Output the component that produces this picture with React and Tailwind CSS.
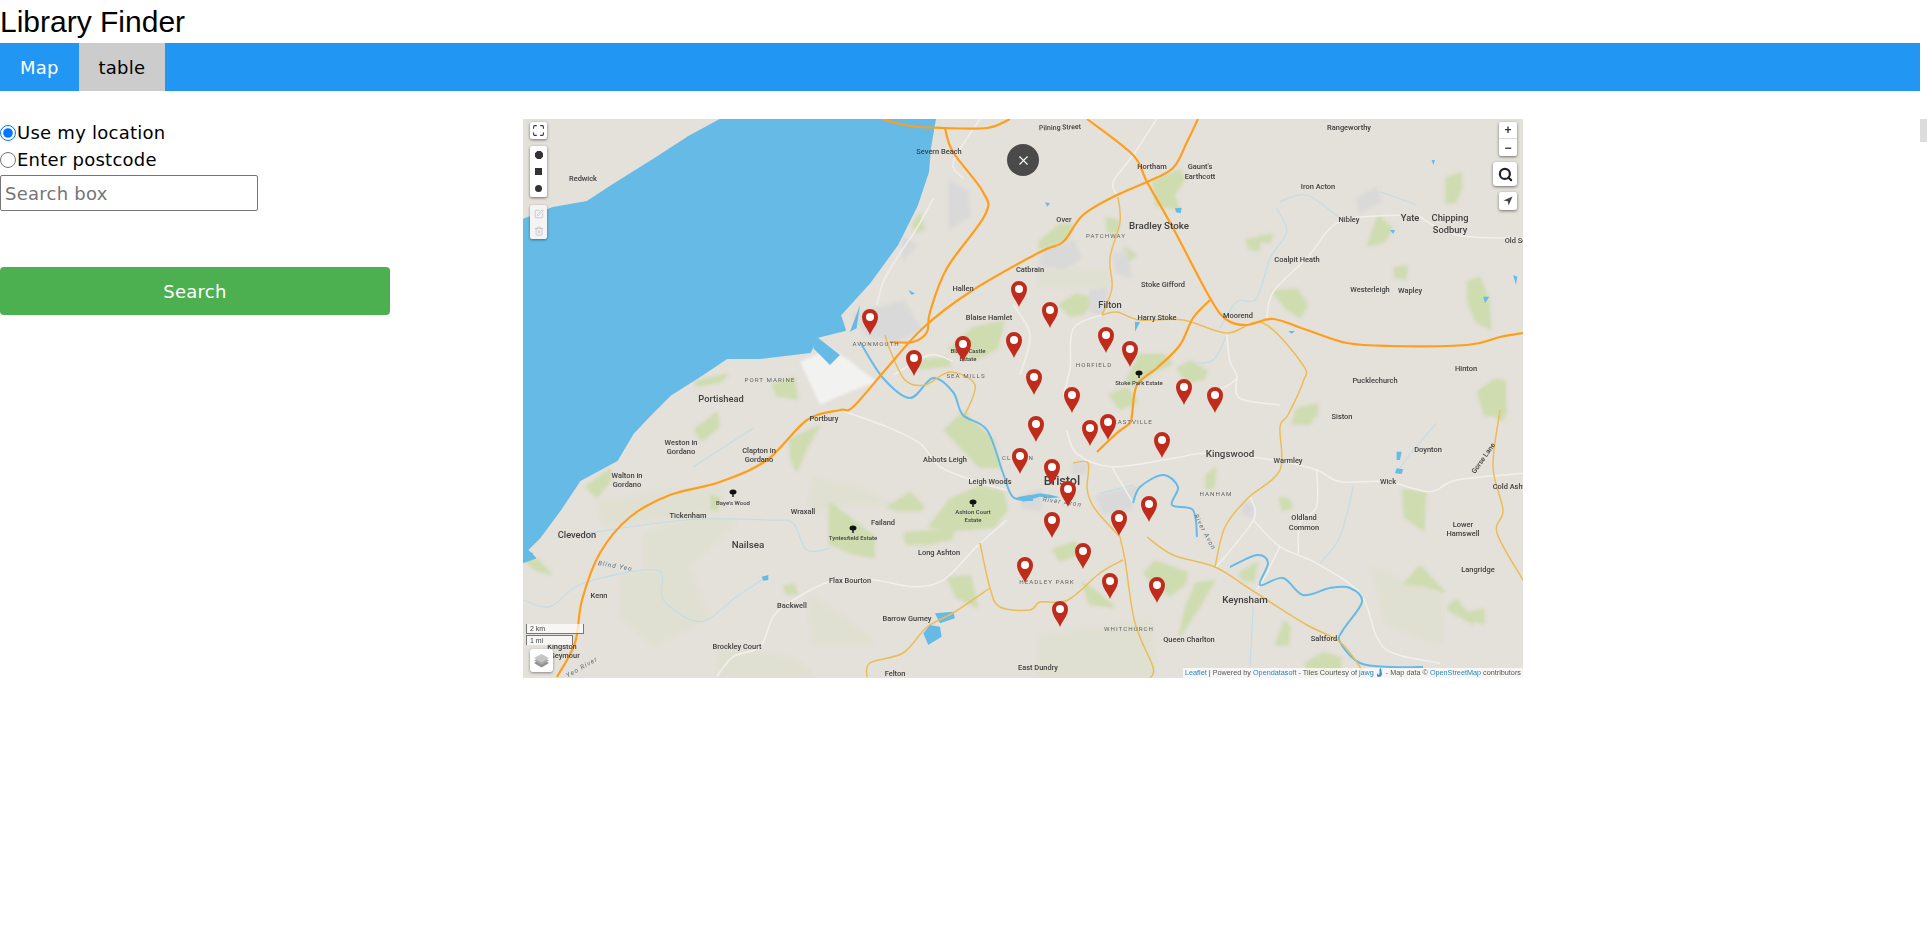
import { useState } from 'react';
import { Maximize, Search, SquarePen, Trash2, X } from 'lucide-react';

// Catmull-Rom through the points, so roads and rivers come out curved
const smooth = (pts) => {
  let d = `M${pts[0][0]} ${pts[0][1]}`;
  for (let i = 0; i < pts.length - 1; i++) {
    const p0 = pts[i - 1] || pts[i];
    const p1 = pts[i];
    const p2 = pts[i + 1];
    const p3 = pts[i + 2] || p2;
    const c1x = p1[0] + (p2[0] - p0[0]) / 6;
    const c1y = p1[1] + (p2[1] - p0[1]) / 6;
    const c2x = p2[0] - (p3[0] - p1[0]) / 6;
    const c2y = p2[1] - (p3[1] - p1[1]) / 6;
    d += ` C${c1x} ${c1y} ${c2x} ${c2y} ${p2[0]} ${p2[1]}`;
  }
  return d;
};

const WATER = '523,220 553,208 587,202 613,185 653,160 687,138 722,119 935,119 930,148 928,172 917,205 897,245 870,282 840,315 845,330 817,337 810,352 760,358 727,358 697,378 670,395 650,415 633,433 617,460 580,480 560,510 540,537 527,550 535,558 523,562';

const MOTORWAYS = [
  [[882,119],[910,126],[943,128],[987,128],[1010,119]],
  [[945,128],[953,152],[983,192],[985,215],[947,268],[930,312],[927,332],[913,342],[890,342]],
  [[557,677],[575,643],[582,600],[600,553],[630,517],[670,495],[720,482],[767,460],[807,420],[840,410],[853,407],[887,368],[923,328],[970,292],[1040,252],[1063,242],[1083,215],[1117,195],[1147,182],[1173,168],[1187,142],[1198,119]],
  [[1087,119],[1133,155],[1147,182],[1173,228],[1210,298],[1227,320],[1247,325],[1273,319],[1307,330],[1347,343],[1390,346],[1467,345],[1500,337],[1523,333]],
  [[1210,300],[1193,318],[1180,345],[1157,368],[1137,385],[1132,415],[1130,423],[1117,433],[1097,452]],
];

const A_ROADS = [
  [[1118,197],[1120,222],[1110,258],[1112,288],[1102,315]],
  [[1102,315],[1117,312],[1140,320],[1183,320],[1227,333],[1263,323],[1303,365],[1303,382],[1288,415],[1280,427],[1280,470],[1248,498],[1225,527],[1215,567]],
  [[1147,537],[1173,555],[1215,567],[1247,587],[1270,602],[1307,625],[1340,642],[1360,667],[1365,678]],
  [[1123,560],[1100,573],[1068,600],[1040,602],[1030,610],[1000,607],[990,588],[980,543]],
  [[990,588],[953,613],[927,627],[903,653],[870,663],[867,677]],
  [[1120,537],[1125,560],[1135,623],[1153,667],[1150,678]],
  [[1500,410],[1493,467],[1503,510],[1497,533],[1523,580]],
  [[1073,463],[1088,463],[1087,487],[1090,500],[1098,513],[1120,537]],
  [[885,335],[890,350],[905,380],[925,385],[950,372],[975,385],[965,415]],
];

const RIVERS = [
  [[860,342],[883,378],[910,398],[933,378],[953,392],[963,415],[987,430],[1003,473],[1013,497],[1033,500]],
  [[1133,503],[1140,487],[1163,475],[1178,487],[1172,505],[1193,510],[1197,537]],
  [[1230,567],[1257,555],[1268,563],[1260,585],[1283,578],[1303,595],[1330,588],[1350,588],[1362,602],[1343,630],[1340,642],[1360,663],[1393,667],[1423,667]],
];

// these are read off the 3x crops, hence the scaled groups below
const ZONES = [
  {
    at: 'translate(520 115) scale(0.3333)',
    pale: [],
    green: ['1290,700 1360,640 1450,620 1430,700 1370,730 1300,710', '1190,740 1280,730 1290,750 1200,760', '760,810 820,790 830,850 770,840', '530,800 620,780 600,800 530,810', '1180,330 1200,300 1210,340 1190,350'],
    grey: ['1000,600 1150,560 1200,640 1130,680 1040,660', '1290,200 1340,230 1350,300 1290,340 1290,280', '1150,370 1190,390 1150,430'],
    white: ['840,740 930,700 980,730 1070,800 990,830 900,870'],
    water: ['990,650 1020,570 1010,640', '890,665 960,720 930,750 880,700', '1165,525 1185,535 1175,540'],
    roads: [[[1380,12],[1300,140],[1330,190]], [[1070,570],[1090,500],[1130,430],[1190,340],[1240,250]], [[1120,780],[1230,720],[1300,740]], [[1480,570],[1530,660],[1500,780]]],
    streams: [],
  },
  {
    at: 'translate(1040 115) scale(0.3333)',
    pale: ['0,470 200,470 200,510 0,510'],
    green: ['340,200 420,165 430,195 400,240 415,280 350,270', '0,380 60,330 95,330 80,370 20,395 0,400', '1220,190 1262,175 1262,220 1245,262 1220,262', '1285,500 1320,490 1345,560 1350,640 1310,620 1285,560', '985,390 1015,305 1055,340 1030,380', '700,530 770,525 800,570 780,605 740,580', '60,570 105,540 160,550 130,595 90,600', '260,800 300,720 370,720 395,745 340,770 280,810', '210,840 260,820 290,860 240,880', '415,760 450,740 500,770 490,790 440,800', '1315,830 1365,795 1395,800 1395,900 1335,900', '1065,460 1100,455 1095,490 1065,485', '620,375 660,370 655,405 630,400', '660,365 695,360 690,380 670,380', '255,400 285,420 270,435', '200,310 235,320 230,350 205,350', '780,880 830,870 830,900 770,900'],
    grey: ['10,400 100,380 120,430 70,460 0,450', '950,250 1010,220 1020,260 960,290', '150,530 200,520 190,600 150,590', '220,420 260,410 270,490 230,470'],
    white: [],
    water: ['15,262 30,265 22,275', '405,280 425,278 422,295 408,292', '1175,135 1185,135 1180,150', '1050,345 1065,345 1060,357', '1420,480 1432,485 1428,510', '1330,545 1348,545 1335,565', '745,648 765,648 755,656', '285,620 300,622 285,650'],
    roads: [[[350,12],[280,120],[220,200],[230,240]], [[680,610],[700,530],[800,430],[900,320],[1080,300]], [[1130,300],[1250,360],[1449,370]], [[560,660],[570,740],[590,790],[530,830]], [[590,790],[600,850],[720,870]], [[185,600],[100,640],[90,760],[70,840]]],
    streams: [[[720,260],[800,240],[900,310]], [[710,280],[740,350],[690,430],[650,550],[590,560],[540,640]], [[1020,230],[1130,270]], [[450,745],[520,735],[560,660]]],
  },
  {
    at: 'translate(520 410) scale(0.3333)',
    pale: ['240,280 450,250 600,240 600,290 450,320 250,340', '380,370 550,320 640,340 500,470 380,470', '310,500 500,470 560,620 400,700 310,620', '880,210 1000,230 1100,280 980,280 870,300', '870,560 960,620 1060,700 880,700', '600,720 820,750 880,800 600,800'],
    green: ['525,60 590,10 595,50 545,90', '810,90 895,50 860,110 830,180 815,150', '200,230 270,180 270,210 230,260', '930,280 1060,380 1060,440 1000,430 930,400', '1105,290 1170,250 1210,290 1200,300 1130,300', '1155,370 1300,360 1295,385 1230,400 1160,400', '1230,350 1290,270 1380,230 1450,250 1460,300 1420,350 1300,360', '1285,505 1350,500 1370,590 1310,560', '1275,60 1330,10 1420,90 1440,170 1380,170', '575,260 595,265 590,300 575,295', '795,530 820,525 830,550 800,550', '15,450 50,450 90,490 50,480'],
    grey: ['1500,260 1560,240 1560,300 1510,290'],
    white: [],
    water: ['1245,610 1300,605 1305,625 1260,640', '1210,670 1230,645 1260,650 1265,680 1225,705', '725,500 745,495 745,510 730,512', '1490,262 1560,250 1560,260 1510,275', '10,420 40,430 30,450 10,450'],
    roads: [[[960,0],[1100,50],[1200,100],[1260,170],[1370,215],[1460,240]], [[590,800],[640,740],[720,710],[760,620],[820,570],[930,515],[1060,510],[1180,530],[1270,510],[1370,410],[1460,330]]],
    streams: [[[520,170],[700,55]], [[10,570],[90,590],[190,520],[410,480],[430,570],[540,635],[650,560],[740,500]], [[200,370],[500,330],[750,330],[820,340],[860,420],[930,415]]],
  },
  {
    at: 'translate(1040 410) scale(0.3333)',
    pale: ['0,680 330,640 340,800 0,800', '1000,480 1200,560 1200,700 1040,640'],
    green: ['1090,240 1155,250 1150,360 1095,320', '1095,520 1140,470 1210,545 1150,525', '440,590 470,520 520,515 470,600 420,675', '710,700 735,635 748,650 745,700 715,705', '800,760 850,730 900,745 900,800 800,800', '315,490 345,455 440,490 435,520 390,555 330,510', '600,490 650,460 640,510 610,510', '1225,590 1250,570 1300,640 1230,600', '1280,610 1330,600 1330,640 1290,625', '1340,0 1400,0 1385,30', '770,0 825,0 810,40 760,40', '500,200 525,175 520,230 500,235', '720,265 745,270 755,290 730,300', '40,420 100,400 150,420 60,450', '130,520 160,540 220,590 150,580'],
    grey: ['170,260 290,230 270,300 190,310', '150,165 130,190 100,190 100,160', '610,280 640,285 635,320 610,310'],
    white: [],
    water: ['1070,125 1085,125 1080,150 1070,150', '1070,175 1090,178 1085,192 1065,190', '0,250 30,254 60,262 30,265 0,260'],
    roads: [[[80,60],[110,130],[215,170],[400,145],[500,130],[700,150],[830,180],[900,215],[1040,215],[1170,245],[1250,210],[1450,190]], [[215,170],[280,280]], [[525,475],[640,330],[630,260]], [[640,330],[720,410],[830,460],[960,550],[1010,680],[1060,730],[1200,760]], [[775,430],[780,340],[830,290],[830,180]], [[720,410],[680,490],[650,540]]],
    streams: [[[940,230],[900,380],[840,460]], [[1190,40],[1120,120],[1075,180]], [[640,590],[630,770]], [[180,250],[280,225]]],
  },
];

// text, centre x, centre y, size, rotation
const LABELS = [
  ['Pilning Street', 1060, 127, 7.5, -2], ['Severn Beach', 939, 151, 8], ['Redwick', 583, 178, 8], ['Catbrain', 1030, 269, 8],
  ['Hallen', 963, 288, 8], ['Blaise Hamlet', 989, 317, 8], ['Blaise Castle', 968, 351, 6.5], ['Estate', 968, 359, 6.5],
  ['Portishead', 721, 398, 10], ['Hortham', 1152, 166, 8], ["Gaunt's", 1200, 166, 8], ['Earthcott', 1200, 176, 8],
  ['Rangeworthy', 1349, 127, 8], ['Iron Acton', 1318, 186, 8], ['Nibley', 1349, 219, 8], ['Yate', 1410, 217, 10],
  ['Chipping', 1450, 217, 10], ['Sodbury', 1450, 229, 10], ['Old Sodbury', 1525, 240, 8], ['Over', 1064, 219, 8],
  ['Bradley Stoke', 1159, 225, 10.5], ['Coalpit Heath', 1297, 259, 8], ['Stoke Gifford', 1163, 284, 8], ['Filton', 1110, 304, 10],
  ['Harry Stoke', 1157, 317, 8], ['Moorend', 1238, 315, 8], ['Westerleigh', 1370, 289, 8], ['Wapley', 1410, 290, 8],
  ['Hinton', 1466, 368, 8], ['Pucklechurch', 1375, 380, 8], ['Stoke Park Estate', 1139, 383, 6.5], ['Siston', 1342, 416, 8],
  ['Kingswood', 1230, 453, 10.5], ['Warmley', 1288, 460, 8], ['Doynton', 1428, 449, 8], ['Gorse Lane', 1483, 458, 7.5, -55],
  ['Wick', 1388, 481, 8], ['Cold Ashton', 1513, 486, 8], ['Bristol', 1062, 480, 13.5], ['Oldland', 1304, 517, 8],
  ['Common', 1304, 527, 8], ['Lower', 1463, 524, 8], ['Hamswell', 1463, 533, 8], ['Langridge', 1478, 569, 8],
  ['Keynsham', 1245, 599, 10.5], ['Queen Charlton', 1189, 639, 8], ['Saltford', 1324, 638, 8], ['East Dundry', 1038, 667, 8],
  ['Portbury', 824, 418, 8], ['Weston in', 681, 442, 8], ['Gordano', 681, 451, 8], ['Clapton in', 759, 450, 8],
  ['Gordano', 759, 459, 8], ['Walton in', 627, 475, 8], ['Gordano', 627, 484, 8], ['Abbots Leigh', 945, 459, 8],
  ['Leigh Woods', 990, 481, 8], ["Baye's Wood", 733, 503, 6.5], ['Tickenham', 688, 515, 8], ['Wraxall', 803, 511, 8],
  ['Failand', 883, 522, 8], ['Ashton Court', 973, 512, 6.5], ['Estate', 973, 520, 6.5], ['Tyntesfield Estate', 853, 538, 6.5],
  ['Clevedon', 577, 534, 10], ['Nailsea', 748, 544, 10.5], ['Long Ashton', 939, 552, 8], ['Flax Bourton', 850, 580, 8],
  ['Kenn', 599, 595, 8], ['Backwell', 792, 605, 8], ['Barrow Gurney', 907, 618, 8], ['Brockley Court', 737, 646, 8],
  ['Kingston', 562, 646, 8], ['Seymour', 565, 655, 8], ['Felton', 895, 673, 8],
];

const AREAS = [
  ['AVONMOUTH', 876, 343], ['SEA MILLS', 966, 375], ['PORT MARINE', 770, 379], ['PATCHWAY', 1106, 235], ['HORFIELD', 1094, 364],
  ['EASTVILLE', 1133, 421], ['HANHAM', 1216, 493], ['CLIFTON', 1018, 457], ['HEADLEY PARK', 1047, 581], ['WHITCHURCH', 1129, 628],
];

const RIVER_NAMES = [['River Avon', 1062, 504, 8], ['River Avon', 1203, 533, 62], ['Blind Yeo', 615, 568, 10], ['Yeo River', 583, 669, -30]];

const TREES = [[733, 493], [973, 503], [853, 529], [1139, 374], [963, 340]];

const MARKERS = [
  [870,335],[914,376],[963,362],[1014,358],[1019,307],[1034,395],[1050,328],[1106,353],[1130,367],
  [1072,413],[1184,405],[1215,413],[1090,446],[1108,440],[1162,458],[1052,485],[1068,507],[1052,538],
  [1149,522],[1119,536],[1083,569],[1110,599],[1157,603],[1060,627],[1036,442],[1020,474],[1025,583],
];

function MapDrawing() {
  return (
    <svg viewBox="523 119 1000 559" className="block h-full w-full bg-[#e4e0da] [font-family:Roboto,sans-serif]">
      <g className="blur-[1.5px]">
        {ZONES.map((z) => (
          <g key={z.at} transform={z.at}>
            {z.pale.map((p) => <polygon key={p} points={p} fill="#dfe0d1" strokeLinejoin="round" stroke="#dfe0d1" strokeWidth="12" />)}
            {z.green.map((p) => <polygon key={p} points={p} fill="#cedcb0" strokeLinejoin="round" stroke="#cedcb0" strokeWidth="8" />)}
            {z.grey.map((p) => <polygon key={p} points={p} fill="#d9d9d9" strokeLinejoin="round" stroke="#d9d9d9" strokeWidth="6" />)}
            {z.white.map((p) => <polygon key={p} points={p} fill="#f2f2f0" />)}
          </g>
        ))}
      </g>
      {ZONES.map((z) => (
        <g key={z.at} transform={z.at}>
          {z.streams.map((r, i) => <path key={i} d={smooth(r)} fill="none" stroke="#c3dde6" strokeWidth="3.5" />)}
          {z.roads.map((r, i) => <path key={i} d={smooth(r)} fill="none" stroke="#f2f0ec" strokeWidth="4.5" />)}
        </g>
      ))}
      <polygon points={WATER} fill="#66bbe6" stroke="#66bbe6" strokeWidth="2" strokeLinejoin="round" />
      {ZONES.map((z) => (
        <g key={z.at} transform={z.at}>
          {z.water.map((p) => <polygon key={p} points={p} fill="#66bbe6" />)}
        </g>
      ))}
      {RIVERS.map((r, i) => <path key={i} d={smooth(r)} fill="none" stroke="#66bbe6" strokeWidth="2" />)}
      {A_ROADS.map((r, i) => <path key={i} d={smooth(r)} fill="none" stroke="#ebbd57" strokeWidth="1.5" />)}
      {MOTORWAYS.map((r, i) => <path key={i} d={smooth(r)} fill="none" stroke="#ff9e1b" strokeWidth="2.2" />)}

      {TREES.map(([x, y]) => (
        <g key={`${x}-${y}`} transform={`translate(${x} ${y})`} fill="#111">
          <ellipse cx="0" cy="-1" rx="3.5" ry="2.5" />
          <rect x="-0.7" y="0" width="1.4" height="4" />
        </g>
      ))}
      {LABELS.map(([t, x, y, size, rot], i) => (
        <text key={i} x={x} y={y + size * 0.35} fontSize={size * 0.93} fontWeight="500" textAnchor="middle" fill="#404040" transform={rot ? `rotate(${rot} ${x} ${y})` : undefined}>{t}</text>
      ))}
      {AREAS.map(([t, x, y]) => (
        <text key={t} x={x} y={y + 2.5} fontSize="6.2" letterSpacing="1" textAnchor="middle" fill="#666">{t}</text>
      ))}
      {RIVER_NAMES.map(([t, x, y, rot]) => (
        <text key={`${t}-${x}`} x={x} y={y} fontSize="6.5" letterSpacing="1" fontStyle="italic" textAnchor="middle" fill="#5d6f78" transform={`rotate(${rot} ${x} ${y})`}>{t}</text>
      ))}

      {MARKERS.map(([x, y]) => (
        <g key={`${x}-${y}`} transform={`translate(${x} ${y})`}>
          <path d="M0 0C-2-6-8-11-8-18A8 8 0 1 1 8-18C8-11 2-6 0 0Z" fill="#bf2c1c" />
          <circle cx="0" cy="-18" r="4" fill="#fff" />
        </g>
      ))}
    </svg>
  );
}

const controlBox = 'flex h-[17px] w-[17px] items-center justify-center text-[#333]';

function MapView() {
  return (
    <div className="relative h-[559px] w-[1000px] overflow-hidden">
      <div className="h-full w-full blur-[0.5px]">
        <MapDrawing />
      </div>

      {/* left hand leaflet controls */}
      <div className="absolute left-[7px] top-[3px] flex flex-col blur-[0.3px]">
        <div className={`${controlBox} rounded-[2px] bg-white shadow-[0_1px_3px_rgba(0,0,0,0.5)]`}>
          <Maximize size={13} strokeWidth={2} />
        </div>
        <div className="mt-[7px] flex flex-col rounded-[2px] bg-white shadow-[0_1px_3px_rgba(0,0,0,0.5)]">
          <div className={controlBox}>
            <svg width="8" height="8" viewBox="0 0 8 8"><polygon points="2.3,0 5.7,0 8,2.3 8,5.7 5.7,8 2.3,8 0,5.7 0,2.3" fill="#333" /></svg>
          </div>
          <div className={controlBox}>
            <div className="h-[7px] w-[7px] bg-[#333]" />
          </div>
          <div className={controlBox}>
            <div className="h-[7px] w-[7px] rounded-full bg-[#333]" />
          </div>
        </div>
        <div className="mt-[8px] flex flex-col rounded-[2px] bg-[#f4f4f4] text-[#b5b5b5] shadow-[0_1px_3px_rgba(0,0,0,0.4)]">
          <div className="flex h-[17px] w-[17px] items-center justify-center">
            <SquarePen size={10} strokeWidth={1.5} />
          </div>
          <div className="flex h-[17px] w-[17px] items-center justify-center">
            <Trash2 size={10} strokeWidth={1.5} />
          </div>
        </div>
      </div>

      {/* right hand controls */}
      <div className="absolute right-[6px] top-[3px] flex flex-col items-end blur-[0.3px]">
        <div className="flex w-[18px] flex-col rounded-[2px] bg-white text-[#333] shadow-[0_1px_3px_rgba(0,0,0,0.5)] [font-family:'Liberation_Sans',sans-serif]">
          <div className="flex h-[17px] items-center justify-center border-b border-[#ddd] text-[12px] font-bold leading-none">+</div>
          <div className="flex h-[17px] items-center justify-center text-[12px] font-bold leading-none">−</div>
        </div>
        <div className="mt-[6px] flex h-[24px] w-[24px] items-center justify-center rounded-[3px] bg-white text-[#222] shadow-[0_1px_3px_rgba(0,0,0,0.5)]">
          <Search size={15} strokeWidth={3.5} />
        </div>
        <div className="mt-[6px] flex h-[18px] w-[18px] items-center justify-center rounded-[2px] bg-white shadow-[0_1px_3px_rgba(0,0,0,0.5)]">
          <svg width="10" height="10" viewBox="0 0 10 10"><path d="M9.5 .5L.5 4.4 4.8 5.2 5.6 9.5Z" fill="#444" /></svg>
        </div>
      </div>

      {/* close button over the map */}
      <div className="absolute left-[484px] top-[25px] flex h-[32px] w-[32px] items-center justify-center rounded-full bg-[#4a4a4a] text-white">
        <X size={15} strokeWidth={1.75} />
      </div>

      {/* scale */}
      <div className="absolute bottom-[33px] left-[3px] flex flex-col gap-px text-[7px] leading-[9px] text-[#444] blur-[0.3px] [font-family:'Liberation_Sans',sans-serif]">
        <div className="h-[10px] w-[58px] border border-t-0 border-[#777] bg-white/70 px-[3px]">2 km</div>
        <div className="h-[10px] w-[47px] border border-b-0 border-[#777] bg-white/70 px-[3px]">1 mi</div>
      </div>

      {/* layers */}
      <div className="absolute bottom-[6px] left-[7px] flex h-[23px] w-[23px] items-center justify-center rounded-[3px] bg-white shadow-[0_1px_3px_rgba(0,0,0,0.4)]">
        <svg width="17" height="17" viewBox="0 0 17 17">
          <polygon points="8.5,7 16,11 8.5,15.5 1,11" fill="#8f8f8f" />
          <polygon points="8.5,4.5 16,8.5 8.5,13 1,8.5" fill="#a8a8a8" />
          <polygon points="8.5,2 16,6 8.5,10.5 1,6" fill="#c6c6c6" />
        </svg>
      </div>

      {/* attribution */}
      <div className="absolute bottom-0 right-0 flex h-[10px] w-[340px] items-center gap-[2px] whitespace-nowrap bg-white/70 pl-[2px] text-[7.25px] text-[#555] blur-[0.2px] [font-family:'Liberation_Sans',sans-serif]">
        <span className="text-[#2a86b4]">Leaflet</span>
        <span>| Powered by</span>
        <span className="text-[#2a86b4]">Opendatasoft</span>
        <span>- Tiles Courtesy of</span>
        <span className="text-[#2a86b4]">jawg</span>
        <svg width="8" height="10" viewBox="0 0 8 10" className="shrink-0"><path d="M5 0L6 6C6 9 2 10 1 8L1 5 2.5 7 3.5 6 3.5 1Z" fill="#3d8fc9" /></svg>
        <span>- Map data ©</span>
        <span className="text-[#2a86b4]">OpenStreetMap</span>
        <span>contributors</span>
      </div>
    </div>
  );
}

export default function App() {
  const [mode, setMode] = useState('location');

  return (
    <div className="relative min-h-[939px] w-[1927px] bg-white text-black [font-family:'DejaVu_Sans',Verdana,sans-serif]">
      <h1 className="flex h-[43px] items-center text-[30px] leading-none [font-family:'Liberation_Sans',Arial,sans-serif]">Library Finder</h1>

      <nav className="flex h-[48px] w-[1920px] bg-[#2196f3] text-[18px] tracking-[0.2px]">
        <a className="flex items-center px-[20px] text-white">Map</a>
        <a className="flex items-center bg-[#cccccc] px-[20px] text-black">table</a>
      </nav>

      <div className="flex items-start pt-[28px]">
        <div className="w-[390px] text-[18px] tracking-[0.25px]">
          <label className="flex h-[27px] items-center gap-px">
            <input type="radio" name="where" checked={mode === 'location'} onChange={() => setMode('location')} className="h-4 w-4" />
            Use my location
          </label>
          <label className="flex h-[27px] items-center gap-px">
            <input type="radio" name="where" checked={mode === 'postcode'} onChange={() => setMode('postcode')} className="h-4 w-4" />
            Enter postcode
          </label>
          <input
            type="text"
            placeholder="Search box"
            className="mt-[2px] block h-[36px] w-[258px] rounded-[2px] border border-[#767676] px-[4px] placeholder:text-[#757575]"
          />
          <button className="mt-[56px] h-[48px] w-full rounded-[4px] bg-[#4caf50] text-white">Search</button>
        </div>
        <div className="ml-[133px]">
          <MapView />
        </div>
      </div>

      <div className="absolute right-0 top-[119px] h-[23px] w-[7px] bg-[#dcdcdc]" />
    </div>
  );
}
